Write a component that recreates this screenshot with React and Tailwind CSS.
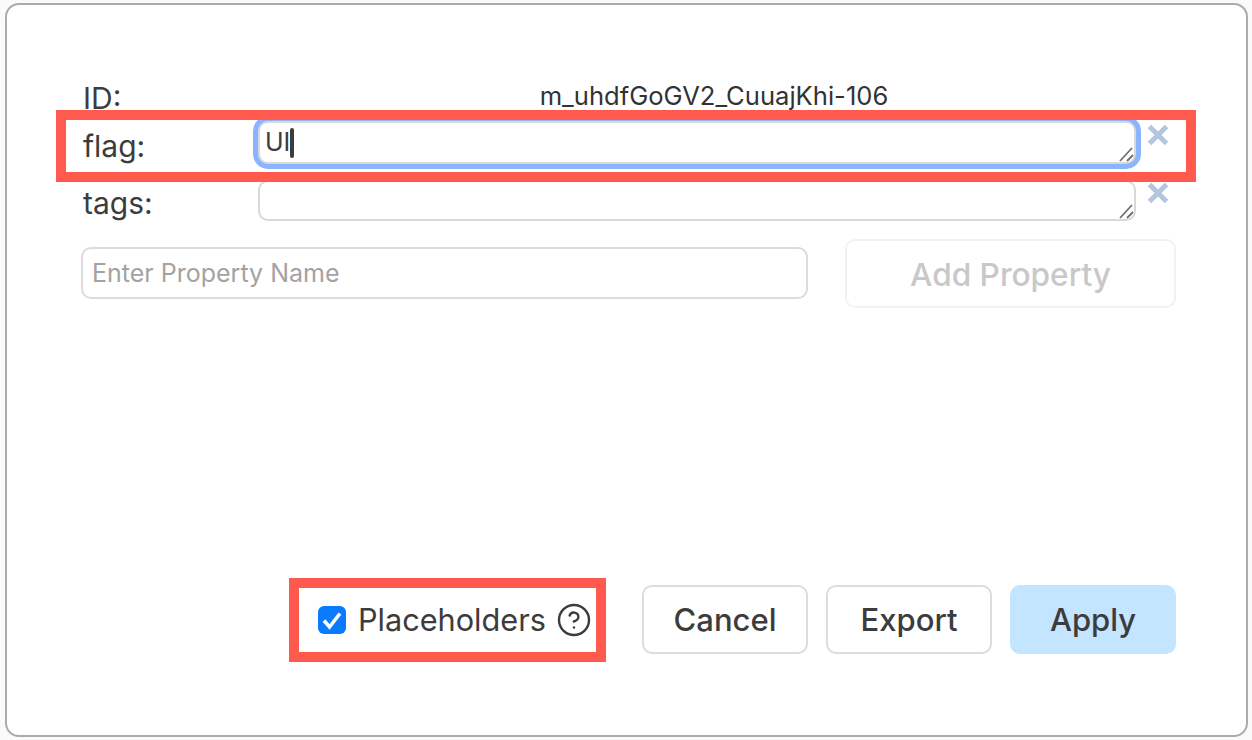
import { CircleHelp } from "lucide-react";

const CloseIcon = ({ className }) => (
  <svg width="24" height="24" viewBox="0 0 24 24" className={"shrink-0 ml-[10px] " + className}>
    <path d="M3.5 3.5 L20.5 20.5 M20.5 3.5 L3.5 20.5" stroke="#b3c6de" strokeWidth="5" />
  </svg>
);

const Grip = () => (
  <svg width="16" height="16" viewBox="0 0 16 16" className="absolute right-[1px] bottom-[1px] overflow-visible">
    <path d="M3 16 L15 3 M10 16 L16 10" stroke="#6f6f6f" strokeWidth="1.8" />
  </svg>
);

const Field = ({ focused, children }) => (
  <div
    className={
      "relative w-[878px] h-full rounded-[10px] border-2 border-[#d9d9d9] bg-white pl-[5px] flex items-center text-[25px] text-[#3c3c3c] " +
      (focused ? "shadow-[0_0_0_5px_#8ab4ff]" : "")
    }
  >
    {children}
    <Grip />
  </div>
);

const Button = ({ children, className }) => (
  <button
    className={
      "w-[166px] h-[69px] pt-[2px] rounded-[10px] text-[31px] font-medium text-[#3c3c3c] " + className
    }
  >
    {children}
  </button>
);

export default function App() {
  return (
    <div className="relative w-[1252px] h-[740px] overflow-hidden bg-[#fafafa] pt-[3px] pl-[5px] font-['Inter',sans-serif]">
      <div className="flex flex-col w-[1243px] h-[734px] rounded-[14px] border-2 border-[#ababab] bg-white pl-[74px] pr-[70px] pt-[77px] pb-[81px] text-[#3c3c3c]">
        <div className="flex items-center h-[34px] mb-[5px]">
          <div className="w-[177px] pl-[2px] pb-[1px] text-[30px]">ID:</div>
          <div className="w-[912px] pb-[5px] text-center text-[25.6px] text-[#333]">m_uhdfGoGV2_CuuajKhi-106</div>
        </div>

        <div className="flex items-start h-[43px] mb-[16px]">
          <div className="w-[177px] pl-[2px] text-[30px] leading-[50px]">flag:</div>
          <Field focused>
            UI
            <span className="w-[4px] h-[30px] bg-[#3c3c3c] rounded-sm"></span>
          </Field>
          <CloseIcon className="mt-[2px]" />
        </div>

        <div className="flex items-start h-[41px] mb-[18px]">
          <div className="w-[177px] pl-[2px] text-[30px] leading-[46px]">tags:</div>
          <Field />
          <CloseIcon className="mt-[1px]" />
        </div>

        <div className="flex items-start justify-between">
          <div className="flex items-center w-[727px] h-[52px] mt-[8px] pt-[2px] rounded-[10px] border-2 border-[#dcdcdc] pl-[9px] text-[25px] text-[#a3a3a3]">
            Enter Property Name
          </div>
          <button className="w-[331px] h-[69px] pt-[2px] rounded-[10px] border-2 border-[#f2f2f2] text-[31.6px] font-medium text-[#c8c8c8]">
            Add Property
          </button>
        </div>

        <div className="flex items-center justify-end mt-auto">
          <div className="flex items-center mr-[50px] pt-[2px]">
            <div className="flex items-center justify-center w-[28px] h-[28px] rounded-[6px] bg-[#0a7aff]">
              <svg width="24" height="24" viewBox="0 0 24 24">
                <path d="M4 12.5 L9.5 19 L20 5.5" fill="none" stroke="white" strokeWidth="3.6" />
              </svg>
            </div>
            <span className="ml-[12px] text-[30.7px] text-[#3c3c3c]">Placeholders</span>
            <CircleHelp className="ml-[10px] w-[36px] h-[36px] text-[#3c3c3c]" strokeWidth={1.6} />
          </div>
          <div className="flex gap-[18px]">
            <Button className="border-2 border-[#dcdcdc] bg-white">Cancel</Button>
            <Button className="border-2 border-[#dcdcdc] bg-white">Export</Button>
            <Button className="bg-[#c4e5ff]">Apply</Button>
          </div>
        </div>
      </div>

      {/* red annotation boxes */}
      <div className="absolute left-[56px] top-[110px] w-[1140px] h-[72px] border-[10px] border-[#ff5a4d]"></div>
      <div className="absolute left-[289px] top-[578px] w-[317px] h-[84px] border-[10px] border-[#ff5a4d]"></div>
    </div>
  );
}
